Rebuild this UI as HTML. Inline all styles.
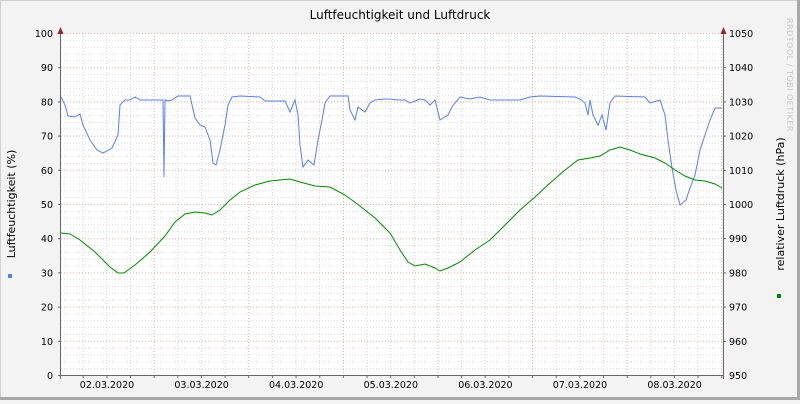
<!DOCTYPE html>
<html><head><style>
html,body{margin:0;padding:0;}
body{width:800px;height:400px;overflow:hidden;background:#f3f3f3;font-family:"DejaVu Sans","Liberation Sans",sans-serif;}
</style></head><body>
<svg width="800" height="400" xmlns="http://www.w3.org/2000/svg" font-family="DejaVu Sans, Liberation Sans, sans-serif">
<rect x="0" y="0" width="800" height="400" fill="#f3f3f3"/>
<rect x="0.5" y="0.5" width="798" height="398" fill="none" stroke="#d0d0d0"/>
<line x1="0" y1="398.5" x2="800" y2="398.5" stroke="#a8a8a8" stroke-width="3"/>
<line x1="798.5" y1="0" x2="798.5" y2="400" stroke="#a8a8a8" stroke-width="3"/>
<rect x="61" y="33" width="662" height="343" fill="#ffffff"/>
<g id="grid" stroke-width="1" stroke-dasharray="1,2">
<g stroke="#d4d4d4">
<script type="text/plain"></script>
</g>
</g>
<g stroke="#cfcfcf" stroke-dasharray="1,2" id="minor"></g>
<g id="txt" font-size="9.5" fill="#000"></g>
<text x="400" y="19" font-size="12" text-anchor="middle">Luftfeuchtigkeit und Luftdruck</text>
<text transform="translate(15,204) rotate(-90)" font-size="11" text-anchor="middle">Luftfeuchtigkeit (%)</text>
<text transform="translate(784,204) rotate(-90)" font-size="11" text-anchor="middle">relativer Luftdruck (hPa)</text>
<text transform="translate(787,18) rotate(90)" font-size="8" fill="#c8c8c8" letter-spacing="0.5">RRDTOOL / TOBI OETIKER</text>
<rect x="8" y="274" width="4" height="4" fill="#5b7fe8"/>
<rect x="777" y="294" width="4" height="4" fill="#008800"/>
<g id="g2"></g>
<polyline fill="none" stroke="#5b7fe8" stroke-width="1" points="61,97 65,105 68,116 75,117 80,114 83,125 90,140 97,150 103,153 112,148 118,135 120,105 125,100 130,100 135,97 140,100 150,100 163,100 164,177 165,100 168,101 172,100 178,96 190,96 195,118 200,125 205,127 210,140 213,163 216,165 220,150 222,140 225,125 228,105 232,97 240,96 260,97 265,101 285,101 290,112 295,100 298,115 300,145 303,167 308,160 314,165 318,140 322,120 325,103 330,96 348,96 350,110 355,120 358,107 365,112 370,103 375,100 385,99 390,99 398,100 405,100 410,103 420,99 425,100 430,105 435,100 440,120 448,115 452,107 455,103 460,97 470,99 480,97 490,100 520,100 530,97 540,96 575,97 580,99 585,103 588,115 590,100 593,115 598,125 602,115 606,130 610,103 615,96 645,97 650,103 660,100 665,115 668,140 672,168 676,190 680,205 686,200 690,188 695,175 700,150 705,135 710,120 715,108 722,108"/>
<polyline fill="none" stroke="#008800" stroke-width="1" points="61,233 70,234 80,240 95,252 110,267 118,273 124,273 135,265 150,252 165,236 175,222 185,214 195,212 205,213 212,215 220,210 230,200 240,192 255,185 270,181 290,179 300,182 315,186 330,187 345,195 360,206 375,218 390,233 400,250 408,262 415,266 425,264 435,268 440,271 448,268 460,262 475,250 490,240 505,225 520,210 535,197 550,183 565,170 578,160 590,158 600,156 610,150 620,147 630,150 640,154 655,158 665,163 675,170 685,176 695,180 705,181 715,184 722,188"/>
<line x1="60.5" y1="31" x2="60.5" y2="379" stroke="#666"/>
<line x1="723.5" y1="31" x2="723.5" y2="379" stroke="#666"/>
<line x1="58" y1="375.5" x2="723" y2="375.5" stroke="#666"/>
<polygon points="57.5,34 63.5,34 60.5,27" fill="#a02020"/>
<polygon points="720.5,34 726.5,34 723.5,27" fill="#a02020"/>
</svg>
<script>
var ns="http://www.w3.org/2000/svg",svg=document.querySelector('svg'),g2=document.getElementById('g2');
function L(x1,y1,x2,y2,c,d){var l=document.createElementNS(ns,'line');l.setAttribute('x1',x1);l.setAttribute('y1',y1);l.setAttribute('x2',x2);l.setAttribute('y2',y2);l.setAttribute('stroke',c);if(d)l.setAttribute('stroke-dasharray','1,2');g2.appendChild(l);}
function T(x,y,s,a){var t=document.createElementNS(ns,'text');t.setAttribute('x',x);t.setAttribute('y',y);t.setAttribute('font-size','9.5');t.setAttribute('text-anchor',a);t.textContent=s;g2.appendChild(t);}
for(var i=1;i<50;i++){var y=375.5-i*6.84;if(i%5)L(61,y,723,y,'#d8d8d8',1);}
for(var i=1;i<=10;i++){var y=375.5-i*34.2;L(61,y,723,y,'#e0a8a8',1);L(58,y,61,y,'#666');L(723,y,726,y,'#666');}
for(var i=0;i<=10;i++){var y=375.5-i*34.2;T(53,y+3.5,String(i*10),'end');T(729,y+3.5,String(950+i*10),'start');}
for(var k=0;k<30;k++){var x=83.2+k*23.65;if(x>722)break;var maj=(k%4==3);L(x,33,x,375,maj?'#e0a8a8':'#d4d4d4',1);L(x,375,x,378,'#666');}
var days=['02','03','04','05','06','07','08'];
for(var i=0;i<7;i++)T(107+i*94.6,388,days[i]+'.03.2020','middle');
</script>
</body></html>
